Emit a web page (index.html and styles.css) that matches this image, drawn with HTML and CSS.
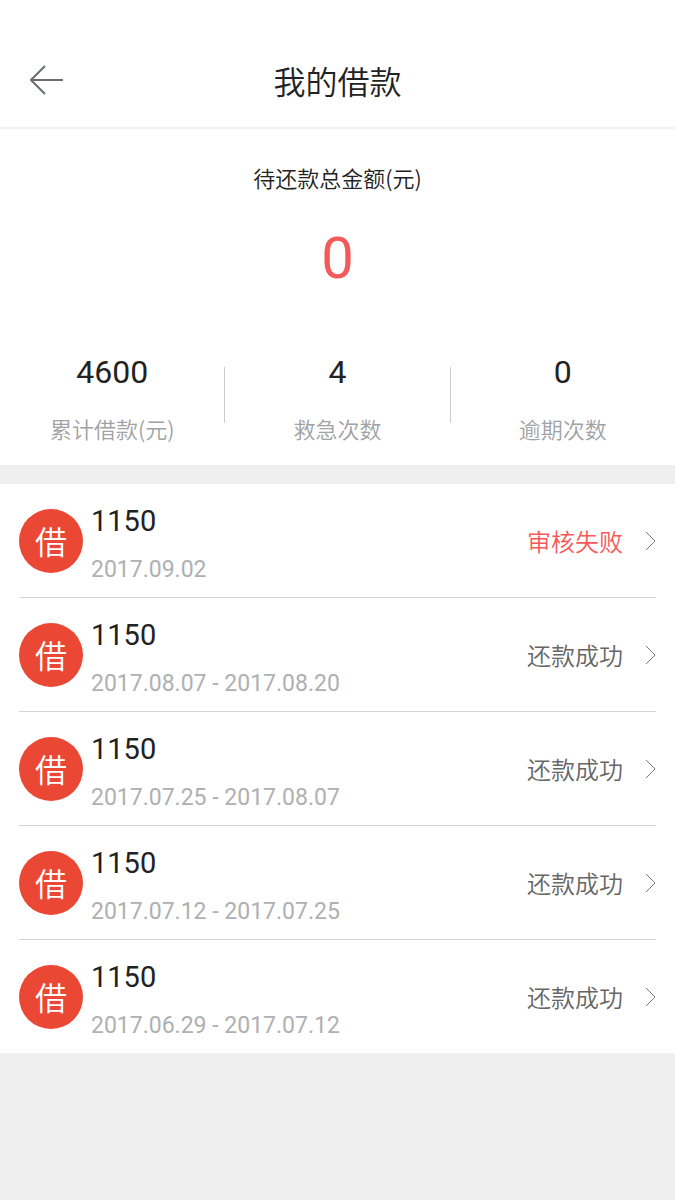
FILE: index.html
```html
<!DOCTYPE html>
<html lang="zh-CN">
<head>
    <meta charset="UTF-8">
    <meta name="viewport" content="width=device-width, initial-scale=1.0">
    <title>我的借款</title>
    <link rel="stylesheet" href="styles.css">
</head>
<body>
    <header class="header">
        <button class="back" type="button" aria-label="返回">
            <svg width="34" height="30" viewBox="0 0 34 30">
                <path d="M15 1 L1 15 L15 29 M1 15 H33" />
            </svg>
        </button>
        <h1>我的借款</h1>
    </header>

    <section class="summary">
        <p class="summary-title">待还款总金额(元)</p>
        <p class="summary-amount">0</p>
        <div class="stats">
            <div class="stat">
                <strong>4600</strong>
                <span>累计借款(元)</span>
            </div>
            <div class="divider"></div>
            <div class="stat">
                <strong>4</strong>
                <span>救急次数</span>
            </div>
            <div class="divider"></div>
            <div class="stat">
                <strong>0</strong>
                <span>逾期次数</span>
            </div>
        </div>
    </section>

    <ul class="loans">
        <li>
            <a class="loan" href="#">
                <span class="badge">借</span>
                <span class="info">
                    <span class="money">1150</span>
                    <span class="date">2017.09.02</span>
                </span>
                <span class="status failed">审核失败</span>
                <svg class="arrow" width="11" height="20" viewBox="0 0 11 20"><path d="M1 1 L10 10 L1 19" /></svg>
            </a>
        </li>
        <li>
            <a class="loan" href="#">
                <span class="badge">借</span>
                <span class="info">
                    <span class="money">1150</span>
                    <span class="date">2017.08.07 - 2017.08.20</span>
                </span>
                <span class="status">还款成功</span>
                <svg class="arrow" width="11" height="20" viewBox="0 0 11 20"><path d="M1 1 L10 10 L1 19" /></svg>
            </a>
        </li>
        <li>
            <a class="loan" href="#">
                <span class="badge">借</span>
                <span class="info">
                    <span class="money">1150</span>
                    <span class="date">2017.07.25 - 2017.08.07</span>
                </span>
                <span class="status">还款成功</span>
                <svg class="arrow" width="11" height="20" viewBox="0 0 11 20"><path d="M1 1 L10 10 L1 19" /></svg>
            </a>
        </li>
        <li>
            <a class="loan" href="#">
                <span class="badge">借</span>
                <span class="info">
                    <span class="money">1150</span>
                    <span class="date">2017.07.12 - 2017.07.25</span>
                </span>
                <span class="status">还款成功</span>
                <svg class="arrow" width="11" height="20" viewBox="0 0 11 20"><path d="M1 1 L10 10 L1 19" /></svg>
            </a>
        </li>
        <li>
            <a class="loan" href="#">
                <span class="badge">借</span>
                <span class="info">
                    <span class="money">1150</span>
                    <span class="date">2017.06.29 - 2017.07.12</span>
                </span>
                <span class="status">还款成功</span>
                <svg class="arrow" width="11" height="20" viewBox="0 0 11 20"><path d="M1 1 L10 10 L1 19" /></svg>
            </a>
        </li>
    </ul>
</body>
</html>
```
FILE: styles.css
```css
* {
    box-sizing: border-box;
}
body {
    margin: 0;
    font-family: "Noto Sans CJK SC", sans-serif;
    font-weight: 350;
    background-color: #efefef;
    color: #222;
}
h1, p, ul {
    margin: 0;
    padding: 0;
}
svg {
    display: block;
    fill: none;
}
.header {
    display: grid;
    grid-template-columns: 64px 1fr 64px;
    align-items: center;
    padding: 55px 0 22px;
    background-color: #fff;
    border-bottom: 2px solid #f1f1f1;
}
.header h1 {
    font-size: 32px;
    line-height: 50px;
    font-weight: 350;
    text-align: center;
}
.back {
    justify-self: end;
    padding: 0;
    border: none;
    background: none;
    cursor: pointer;
}
.back path {
    stroke: #6a6e72;
    stroke-width: 2;
}
.summary {
    padding: 32px 0 21px;
    background-color: #fff;
    text-align: center;
}
.summary-title {
    font-size: 22px;
    line-height: 32px;
}
/* Números en Roboto */
.summary-amount, .stat strong, .money, .date {
    font-family: Roboto, sans-serif;
    font-weight: 400;
}
.summary-amount {
    margin-top: 25px;
    font-size: 58px;
    line-height: 80px;
    color: #f65959;
}
.stats {
    display: flex;
    align-items: flex-start;
    margin-top: 54px;
}
.stat {
    display: flex;
    flex-direction: column;
    flex: 1;
    gap: 20px;
}
.stat strong {
    font-size: 32px;
    line-height: 40px;
}
.stat span {
    font-size: 22px;
    line-height: 32px;
    color: #a0a2a4;
}
.divider {
    width: 1px;
    height: 56px;
    margin-top: 15px;
    background-color: #ccc;
}
.loans {
    margin-top: 19px;
    padding: 0 19px;
    list-style: none;
    background-color: #fff;
}
.loans li + li {
    border-top: 1px solid #d4d4d4;
}
.loan {
    display: flex;
    align-items: center;
    height: 113px;
    color: #222;
    text-decoration: none;
}
.badge {
    width: 64px;
    height: 64px;
    margin-right: 8px;
    border-radius: 50%;
    background-color: #ea4734;
    color: #fff;
    font-size: 32px;
    line-height: 62px;
    text-align: center;
}
.info {
    display: flex;
    flex-direction: column;
    gap: 17px;
    flex: 1;
    padding-top: 9px;
}
.money {
    font-size: 29px;
    line-height: 32px;
}
.date {
    font-size: 23px;
    line-height: 32px;
    color: #aeb0b2;
}
.status {
    font-size: 24px;
    line-height: 36px;
    color: #666;
}
.failed {
    color: #f65959;
}
.arrow {
    margin-left: 22px;
}
.arrow path {
    stroke: #74797e;
    stroke-width: 1;
}
```
